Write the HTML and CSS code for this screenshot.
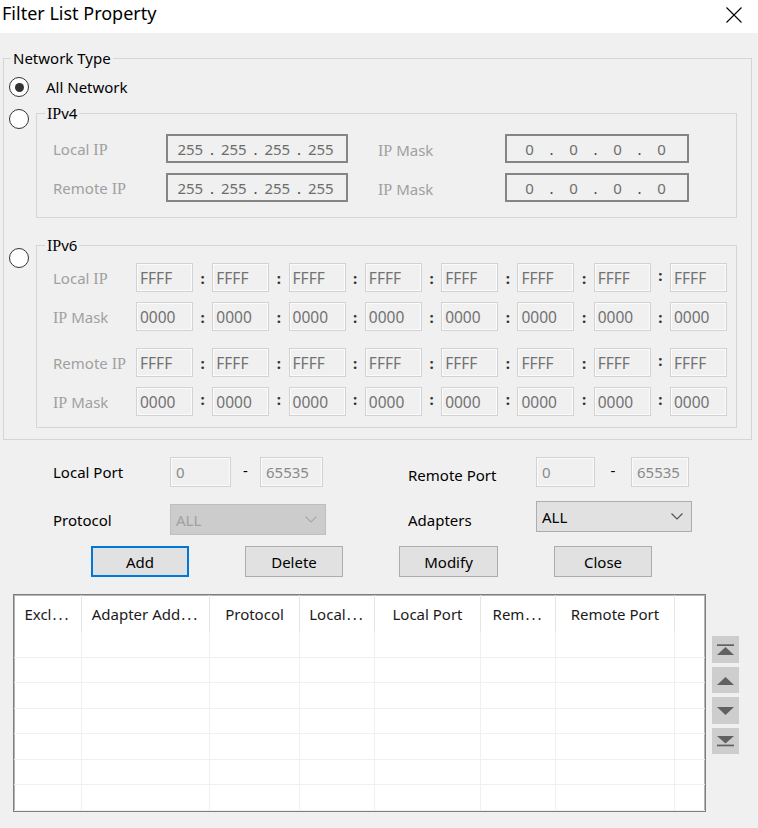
FILE: index.html
```html
<!DOCTYPE html>
<html>
<head>
<meta charset="utf-8">
<title>Filter List Property</title>
<link rel="stylesheet" href="styles.css">
</head>
<body>
<div class="titlebar">
  <span class="title">Filter List Property</span>
  <svg class="close" width="16" height="16" viewBox="0 0 16 16"><path d="M0.5 0.5 L15.5 15.5 M15.5 0.5 L0.5 15.5" stroke="#000" stroke-width="1.1" fill="none"/></svg>
</div>
<div class="content">
  <fieldset class="gb gb-net">
    <legend class="lg lg-net">Network Type</legend>
    <div class="net-body">
      <div class="rrow">
        <span class="radio checked"></span><span class="rtext">All Network</span>
      </div>

      <div class="rgroup g4">
        <span class="radio"></span>
        <fieldset class="gb gb-sub">
          <legend class="lg lg-sub"><span class="ip">IP</span>v4</legend>
          <div class="v4body">
            <div class="v4row">
              <span class="lbl lbl-v4">Local <span class="ip">IP</span></span>
              <div class="ipbox ip-a"><span>255</span><i>.</i><span>255</span><i>.</i><span>255</span><i>.</i><span>255</span></div>
              <span class="lbl lbl-mask"><span class="ip">IP</span> Mask</span>
              <div class="ipbox ip-b"><span>0</span><i>.</i><span>0</span><i>.</i><span>0</span><i>.</i><span>0</span></div>
            </div>
            <div class="v4row">
              <span class="lbl lbl-v4">Remote <span class="ip">IP</span></span>
              <div class="ipbox ip-a"><span>255</span><i>.</i><span>255</span><i>.</i><span>255</span><i>.</i><span>255</span></div>
              <span class="lbl lbl-mask"><span class="ip">IP</span> Mask</span>
              <div class="ipbox ip-b"><span>0</span><i>.</i><span>0</span><i>.</i><span>0</span><i>.</i><span>0</span></div>
            </div>
          </div>
        </fieldset>
      </div>

      <div class="rgroup g6">
        <span class="radio"></span>
        <fieldset class="gb gb-sub">
          <legend class="lg lg-sub"><span class="ip">IP</span>v6</legend>
          <div class="v6body">
            <div class="v6row">
              <span class="lbl">Local <span class="ip">IP</span></span>
              <span class="f6">FFFF</span><span class="col">:</span>
              <span class="f6">FFFF</span><span class="col">:</span>
              <span class="f6">FFFF</span><span class="col">:</span>
              <span class="f6">FFFF</span><span class="col">:</span>
              <span class="f6">FFFF</span><span class="col">:</span>
              <span class="f6">FFFF</span><span class="col">:</span>
              <span class="f6">FFFF</span><span class="col up">:</span>
              <span class="f6">FFFF</span>
            </div>
            <div class="v6row r2">
              <span class="lbl"><span class="ip">IP</span> Mask</span>
              <span class="f6">0000</span><span class="col">:</span>
              <span class="f6">0000</span><span class="col">:</span>
              <span class="f6">0000</span><span class="col">:</span>
              <span class="f6">0000</span><span class="col">:</span>
              <span class="f6">0000</span><span class="col">:</span>
              <span class="f6">0000</span><span class="col">:</span>
              <span class="f6">0000</span><span class="col">:</span>
              <span class="f6">0000</span>
            </div>
            <div class="v6row r3">
              <span class="lbl">Remote <span class="ip">IP</span></span>
              <span class="f6">FFFF</span><span class="col">:</span>
              <span class="f6">FFFF</span><span class="col">:</span>
              <span class="f6">FFFF</span><span class="col">:</span>
              <span class="f6">FFFF</span><span class="col">:</span>
              <span class="f6">FFFF</span><span class="col">:</span>
              <span class="f6">FFFF</span><span class="col">:</span>
              <span class="f6">FFFF</span><span class="col up">:</span>
              <span class="f6">FFFF</span>
            </div>
            <div class="v6row r4">
              <span class="lbl"><span class="ip">IP</span> Mask</span>
              <span class="f6">0000</span><span class="col up">:</span>
              <span class="f6">0000</span><span class="col up">:</span>
              <span class="f6">0000</span><span class="col up">:</span>
              <span class="f6">0000</span><span class="col up">:</span>
              <span class="f6">0000</span><span class="col up">:</span>
              <span class="f6">0000</span><span class="col up">:</span>
              <span class="f6">0000</span><span class="col up">:</span>
              <span class="f6">0000</span>
            </div>
          </div>
        </fieldset>
      </div>
    </div>
  </fieldset>

  <div class="ports">
    <span class="plbl">Local Port</span>
    <span class="pf">0</span>
    <span class="dash">-</span>
    <span class="pf">65535</span>
    <span class="plbl rp">Remote Port</span>
    <span class="pf">0</span>
    <span class="dash">-</span>
    <span class="pf">65535</span>

    <span class="plbl pr">Protocol</span>
    <div class="combo dis"><span>ALL</span><svg width="12" height="7" viewBox="0 0 12 7"><polyline points="0.5,0.5 6,6 11.5,0.5" fill="none" stroke="#a9a9a9" stroke-width="1.1"/></svg></div>
    <span class="plbl ad">Adapters</span>
    <div class="combo en"><span>ALL</span><svg width="12" height="7" viewBox="0 0 12 7"><polyline points="0.5,0.5 6,6 11.5,0.5" fill="none" stroke="#505050" stroke-width="1.1"/></svg></div>
  </div>

  <div class="btnrow">
    <button class="btn def">Add</button>
    <button class="btn">Delete</button>
    <button class="btn wide">Modify</button>
    <button class="btn">Close</button>
  </div>

  <div class="listarea">
    <div class="list">
      <div class="lrow lhead">
        <div>Excl<span class="ell">...</span></div><div>Adapter Add<span class="ell">...</span></div><div>Protocol</div><div>Local<span class="ell">...</span></div><div>Local Port</div><div>Rem<span class="ell">...</span></div><div>Remote Port</div><div></div>
      </div>
      <div class="lrow lbody"><div></div><div></div><div></div><div></div><div></div><div></div><div></div><div></div></div>
      <div class="lrow lbody"><div></div><div></div><div></div><div></div><div></div><div></div><div></div><div></div></div>
      <div class="lrow lbody"><div></div><div></div><div></div><div></div><div></div><div></div><div></div><div></div></div>
      <div class="lrow lbody"><div></div><div></div><div></div><div></div><div></div><div></div><div></div><div></div></div>
      <div class="lrow lbody"><div></div><div></div><div></div><div></div><div></div><div></div><div></div><div></div></div>
      <div class="lrow lbody"><div></div><div></div><div></div><div></div><div></div><div></div><div></div><div></div></div>
      <div class="lrow lbody"><div></div><div></div><div></div><div></div><div></div><div></div><div></div><div></div></div>
    </div>
    <div class="scol">
      <div class="sbtn"><svg width="27" height="26" viewBox="0 0 27 26"><rect x="5" y="8.3" width="17" height="1.7" fill="#616161"/><polygon points="5,19 22,19 13.5,11" fill="#616161"/></svg></div>
      <div class="sbtn"><svg width="27" height="26" viewBox="0 0 27 26"><polygon points="5,18 22,18 13.5,10" fill="#616161"/></svg></div>
      <div class="sbtn"><svg width="27" height="26" viewBox="0 0 27 26"><polygon points="5,10 22,10 13.5,18" fill="#616161"/></svg></div>
      <div class="sbtn"><svg width="27" height="26" viewBox="0 0 27 26"><polygon points="5,8 22,8 13.5,15.5" fill="#616161"/><rect x="5" y="16.6" width="17" height="1.7" fill="#616161"/></svg></div>
    </div>
  </div>
</div>
</body>
</html>
```

FILE: styles.css
```css
* { box-sizing: border-box; }
html, body { margin: 0; padding: 0; }
body {
  width: 758px;
  height: 828px;
  overflow: hidden;
  background: #f0f0f0;
  font-family: "Noto Sans", "Open Sans", sans-serif;
  font-size: 15px;
  color: #000;
}

/* title bar */
.titlebar {
  height: 33px;
  background: #fff;
  display: flex;
  align-items: flex-start;
}
.title {
  font-size: 18px;
  line-height: 26px;
  padding-left: 2px;
}
.close {
  display: block;
  margin: 7px 16px 0 auto;
}

.content { padding-top: 17px; }

/* group boxes */
.gb {
  border: 1px solid #d5d5d5;
  margin: 0;
  padding: 0;
  min-width: 0;
}
.gb-net { margin: 0 6px 0 3px; }
.lg {
  padding: 0 2px;
  height: 16px;
  line-height: 16px;
  font-size: 15px;
  color: #000;
}
.lg-net { margin-left: 7px; }
.lg-sub { margin-left: 8px; }
.ip {
  font-family: "Liberation Serif", serif;
  font-size: 16px;
  line-height: 1px;
}

.net-body { padding: 11px 14px 11px 5px; }

.rrow {
  display: flex;
  align-items: center;
  height: 20px;
}
.radio {
  width: 20px;
  height: 20px;
  flex: none;
  border: 1.5px solid #333;
  border-radius: 50%;
  background: #fff;
  display: flex;
  align-items: center;
  justify-content: center;
}
.radio.checked::after {
  content: "";
  width: 9px;
  height: 9px;
  border-radius: 50%;
  background: #333;
}
.rtext { margin-left: 17px; }

.rgroup {
  display: flex;
  align-items: flex-start;
}
.rgroup .gb-sub { flex: 1; margin-left: 7px; }
.g4 { margin-top: 8px; }
.g4 > .radio { margin-top: 4px; }
.g6 { margin-top: 19px; }
.g6 > .radio { margin-top: 11px; }

/* IPv4 */
.v4body { padding: 13px 0 15px 16px; }
.v4row {
  display: flex;
  align-items: center;
  height: 29px;
}
.v4row + .v4row { margin-top: 10px; }
.lbl { color: #a0a0a0; white-space: nowrap; }
.lbl-v4 { width: 113px; flex: none; }
.lbl-mask { width: 127px; margin-left: 30px; padding-top: 3px; flex: none; }

.ipbox {
  height: 29px;
  flex: none;
  border: 2px solid #858585;
  background: #f0f0f0;
  display: grid;
  grid-template-columns: 1fr 13px 1fr 13px 1fr 13px 1fr;
  align-items: center;
  padding: 0 10px 0 7px;
  color: #6d6d6d;
}
.ip-a { width: 182px; }
.ip-b { width: 184px; }
.ipbox span { text-align: center; }
.ipbox i { font-style: normal; text-align: center; color: #444; }

/* IPv6 */
.v6body { padding: 10px 9px 11px 16px; }
.v6row {
  display: grid;
  grid-template-columns: 83px repeat(7, 57px 1fr) 57px;
  height: 29px;
  align-items: center;
}
.v6row.r2, .v6row.r4 { margin-top: 10px; }
.v6row.r3 { margin-top: 17px; }
.f6 {
  height: 29px;
  border: 1px solid #d2d2d2;
  box-shadow: inset 0 0 0 1px #fbfbfb;
  background: #f0f0f0;
  color: #727272;
  padding-left: 3px;
  display: flex;
  align-items: center;
  font-size: 15.5px;
}
.col {
  text-align: center;
  font-weight: 700;
  color: #333;
}
.col.up { margin-bottom: 6px; }

/* ports */
.ports {
  display: grid;
  grid-template-columns: 117px 61px 29px 63px 85px 128px 59px 36px 58px;
  grid-template-rows: 30px 34px;
  row-gap: 14px;
  margin: 17px 0 0 53px;
  align-items: center;
}
.plbl { white-space: nowrap; }
.plbl.rp { grid-column: 6; margin-top: 6px; }
.plbl.pr { margin-top: 3px; }
.plbl.ad { grid-column: 6; margin-top: 4px; }
.pf {
  height: 30px;
  border: 1px solid #d2d2d2;
  box-shadow: inset 0 0 0 1px #fbfbfb;
  background: #f0f0f0;
  color: #8a8a8a;
  padding-left: 5px;
  display: flex;
  align-items: center;
}
.dash { text-align: center; margin-bottom: 4px; }
.combo {
  width: 156px;
  height: 31px;
  display: flex;
  align-items: center;
  justify-content: space-between;
  padding: 0 8px 0 5px;
}
.combo svg { display: block; }
.combo.dis {
  grid-column: 2 / span 3;
  align-self: end;
  background: #cccccc;
  border: 1px solid #bfbfbf;
  color: #a0a0a0;
}
.combo.en {
  grid-column: 7 / span 3;
  align-self: start;
  background: #e1e1e1;
  border: 1px solid #adadad;
}

/* buttons */
.btnrow {
  display: flex;
  gap: 56px;
  margin: 11px 0 0 91px;
}
.btn {
  width: 98px;
  height: 31px;
  padding: 0;
  margin: 0;
  background: #e1e1e1;
  border: 1px solid #adadad;
  font-family: inherit;
  font-size: 15px;
  color: #000;
  display: flex;
  align-items: center;
  justify-content: center;
}
.btn.wide { width: 99px; }
.btn.def { border: 2px solid #0078d7; }

/* list */
.listarea {
  display: flex;
  align-items: flex-start;
  margin: 17px 0 0 13px;
}
.list {
  width: 693px;
  height: 218px;
  flex: none;
  border: 1px solid #7e7e7e;
  box-shadow: inset 0 0 0 1px #b4b4b4;
  background: #fff;
  overflow: hidden;
}
.lrow {
  display: grid;
  grid-template-columns: 68px 128px 90px 75px 106px 75px 119px 1fr;
}
.lhead { height: 37px; }
.lhead > div {
  border-right: 1px solid #e5e5e5;
  display: flex;
  align-items: center;
  justify-content: center;
  white-space: nowrap;
  color: #1a1a1a;
}
.lhead > div:last-child { border-right: none; }
.ell { letter-spacing: 2px; margin-left: 1px; }
.lbody { height: 25.5px; border-bottom: 1px solid #f0f0f0; }
.lbody > div { border-right: 1px solid #f0f0f0; }
.lbody > div:last-child { border-right: none; }

.scol {
  margin: 42px 0 0 6px;
  display: flex;
  flex-direction: column;
  gap: 4px;
}
.sbtn {
  width: 27px;
  height: 26.5px;
  background: #cdcdcd;
}
.sbtn svg { display: block; }
```
